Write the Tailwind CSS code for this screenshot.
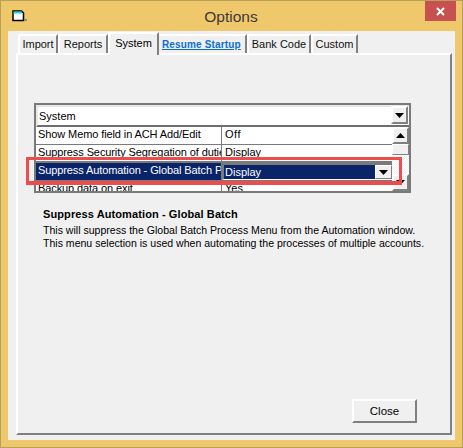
<!DOCTYPE html>
<html>
<head>
<meta charset="utf-8">
<script src="https://cdn.jsdelivr.net/npm/@tailwindcss/browser@4"></script>
</head>
<body class="m-0 bg-white">
<div class="relative w-[463px] h-[448px] overflow-hidden bg-[#f0c86c] border border-[#b9a05a] font-['Liberation_Sans',sans-serif] text-[11px] text-black box-border">
  <!-- title bar -->
  <div class="relative flex items-center justify-center h-[30px]">
    <svg class="absolute left-[11px] top-[9px]" width="15" height="12" viewBox="0 0 15 12">
      <path d="M1 1h8.500l2 2v7.500h-10.500z" fill="#fff" stroke="#000" stroke-width="1.500"/>
      <rect x="1.500" y="1.500" width="8.500" height="2" fill="#19d3e0"/>
      <rect x="12" y="9" width="3" height="2" fill="#8a8a8a"/>
    </svg>
    <span class="text-[15.500px] text-[#3a3a3a] pr-[1px] pt-[1px]">Options</span>
    <div class="absolute right-[6px] top-0 w-[31px] h-[20px] bg-[#c75050] flex items-center justify-center">
      <svg width="9" height="9" viewBox="0 0 9 9"><path d="M1 1l7 7M8 1l-7 7" stroke="#fff" stroke-width="2"/></svg>
    </div>
  </div>
  <!-- client -->
  <div class="relative w-[447px] h-[409px] ml-[7px] bg-[#f0f0f0] pl-[8px] pt-[1px]">
    <!-- tabs -->
    <div class="flex items-end h-[21px] pl-[2px] text-[#101010]">
      <div class="w-[40px] h-[19px] bg-[#f0f0f0] border-t-2 border-l-2 border-white border-r-2 border-r-[#808080] flex items-center justify-center rounded-tl-[2px]">Import</div>
      <div class="w-[50px] h-[19px] border-t-2 border-l-2 border-white border-r-2 border-r-[#808080] flex items-center justify-center rounded-tl-[2px]">Reports</div>
      <div class="relative z-10 w-[51px] h-[23px] mb-[-2px] pb-[3px] bg-[#f0f0f0] border-t-2 border-l-2 border-white border-r-2 border-r-[#808080] flex items-center justify-center text-black rounded-tl-[2px]">System</div>
      <div class="w-[88px] h-[19px] border-t-2 border-white border-r-2 border-r-[#808080] flex items-center pl-[3px] text-[10px] font-bold text-[#0b6fd0] underline tracking-[0.15px] whitespace-nowrap">Resume Startup</div>
      <div class="w-[64px] h-[19px] border-t-2 border-l-2 border-white border-r-2 border-r-[#808080] flex items-center justify-center whitespace-nowrap rounded-tl-[2px]">Bank Code</div>
      <div class="w-[47px] h-[19px] border-t-2 border-l-2 border-white border-r-2 border-r-[#808080] flex items-center justify-center rounded-tl-[2px]">Custom</div>
    </div>
    <!-- panel -->
    <div class="relative w-[436px] h-[382px] border-t-2 border-l-2 border-white border-r-2 border-r-[#808080] border-b-2 border-b-[#808080] pt-[48px] pl-[16px]">
      <!-- grid -->
      <div class="w-[377px] h-[90px] border-2 border-[#7a7a7a] bg-white overflow-hidden">
        <div class="relative flex items-center h-[22px] border-t-2 border-l-2 border-[#e8e8e8] pl-[1px] border-b-2 border-b-[#6e6e6e]">
          <span>System</span>
          <div class="absolute right-[1px] top-[-1px] w-[17px] h-[18px] bg-[#f0f0f0] border-2 border-white border-r-[#808080] border-b-[#808080] flex items-center justify-center">
            <svg width="9" height="5" viewBox="0 0 9 5"><path d="M0 0h9l-4.500 5z" fill="#000"/></svg>
          </div>
        </div>
        <div class="relative flex">
          <div class="flex-1 min-w-0">
            <div class="flex h-[18px] border-b border-[#7a7a7a]">
              <div class="w-[186px] pl-[2px] border-r border-[#7a7a7a] whitespace-nowrap overflow-hidden leading-[15px] tracking-[-0.1px]">Show Memo field in ACH Add/Edit</div>
              <div class="pl-[3px] leading-[15px] tracking-[0.5px]">Off</div>
            </div>
            <div class="flex h-[18px] border-b-2 border-[#7a7a7a]">
              <div class="w-[186px] pl-[2px] border-r border-[#7a7a7a] whitespace-nowrap overflow-hidden leading-[15px] tracking-[-0.1px]">Suppress Security Segregation of duties</div>
              <div class="pl-[3px] leading-[15px]">Display</div>
            </div>
            <div class="flex h-[18px] border-b border-[#7a7a7a]">
              <div class="w-[186px] h-[17px] pl-[2px] bg-[#0a246a] text-white border-r border-[#7a7a7a] whitespace-nowrap overflow-hidden leading-[15px] tracking-[-0.1px]">Suppress Automation - Global Batch Process</div>
              <div class="flex flex-1 h-[17px] border-t-2 border-l-2 border-[#7a7a7a] border-b border-b-white">
                <div class="flex-1 pl-[1px] bg-[#0a246a] text-white leading-[14px]">Display</div>
                <div class="w-[17px] bg-[#f0f0f0] border border-white border-r-[#808080] border-b-[#808080] flex items-center justify-center">
                  <svg width="9" height="5" viewBox="0 0 9 5"><path d="M0 0h9l-4.500 5z" fill="#000"/></svg>
                </div>
              </div>
            </div>
            <div class="flex h-[16px]">
              <div class="w-[186px] pl-[2px] border-r border-[#7a7a7a] whitespace-nowrap overflow-hidden leading-[15px] tracking-[-0.1px]">Backup data on exit</div>
              <div class="pl-[3px] leading-[15px]">Yes</div>
            </div>
          </div>
          <!-- scrollbar -->
          <div class="w-[17px] h-[64px] flex flex-col bg-[repeating-conic-gradient(#f0f0f0_0_25%,#fff_0_50%)] bg-[length:2px_2px]">
            <div class="h-[17px] bg-[#f0f0f0] border-2 border-white border-r-[#808080] border-b-[#808080] flex items-center justify-center">
              <svg width="9" height="5" viewBox="0 0 9 5"><path d="M4.500 0l4.500 5h-9z" fill="#000"/></svg>
            </div>
            <div class="h-[11px] bg-[#f0f0f0] border border-white border-r-[#808080] border-b-[#808080]"></div>
            <div class="flex-1"></div>
            <div class="h-[17px] bg-[#f0f0f0] border-2 border-white border-r-[#808080] border-b-[#808080] flex items-center justify-center">
              <svg width="9" height="5" viewBox="0 0 9 5"><path d="M0 0h9l-4.500 5z" fill="#000"/></svg>
            </div>
          </div>
        </div>
      </div>
      <!-- description -->
      <div class="w-[220px] h-[18px] mt-[14px] ml-[9px] overflow-hidden font-bold leading-[15px] tracking-[0.1px]">Suppress Automation - Global Batch Process Menu</div>
      <div class="ml-[9px] -mt-[1px] text-[10.550px] leading-[13px] whitespace-nowrap">This will suppress the Global Batch Process Menu from the Automation window.<br>This menu selection is used when automating the processes of multiple accounts.</div>
      <!-- close -->
      <button class="absolute right-[33px] bottom-[10px] w-[65px] h-[24px] pt-[1px] bg-[#f0f0f0] border-2 border-white border-r-[#808080] border-b-[#808080] flex items-center justify-center text-[11.500px]">Close</button>
    </div>
  </div>
  <!-- red highlight -->
  <div class="absolute left-[25px] top-[156px] w-[376px] h-[28px] border-[3px] border-b-4 border-[#ee4d4d]"></div>
</div>
</body>
</html>
